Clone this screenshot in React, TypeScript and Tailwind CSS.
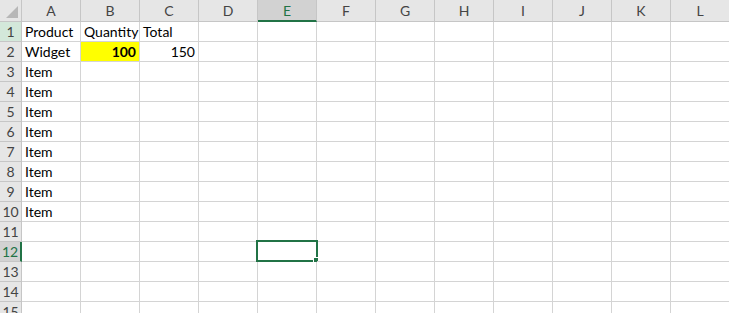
import React from 'react';

const columns = ['A', 'B', 'C', 'D', 'E', 'F', 'G', 'H', 'I', 'J', 'K', 'L'];

type Cell = { text: string; right?: boolean; bold?: boolean; fill?: string };

const data: Record<string, Cell> = {
  A1: { text: 'Product' },
  B1: { text: 'Quantity' },
  C1: { text: 'Total' },
  A2: { text: 'Widget' },
  B2: { text: '100', right: true, bold: true, fill: 'yellow' },
  C2: { text: '150', right: true },
  A3: { text: 'Item' },
  A4: { text: 'Item' },
  A5: { text: 'Item' },
  A6: { text: 'Item' },
  A7: { text: 'Item' },
  A8: { text: 'Item' },
  A9: { text: 'Item' },
  A10: { text: 'Item' },
};

const rows = Array.from({ length: 15 }, (_, i) => i + 1);

const App: React.FC = () => {
  return (
    <div className="w-[729px] h-[313px] overflow-hidden bg-white font-['Lato','Liberation_Sans',sans-serif] text-[14px] leading-none text-black">
      <div className="grid grid-cols-[22px_repeat(12,59px)] grid-rows-[22px_repeat(15,20px)]">
        {/* corner */}
        <div className="relative bg-[#e6e6e6] border-r border-b border-[#c6c6c6]">
          <svg className="absolute right-[3px] bottom-[3px]" width="12" height="12" viewBox="0 0 12 12">
            <polygon points="12,0 12,12 0,12" fill="#b7b7b7" />
          </svg>
        </div>
        {columns.map((c) => {
          const selected = c === 'E';
          return (
            <div
              key={c}
              className={`flex items-center justify-center border-r border-[#c6c6c6] pt-[1px] ${
                selected
                  ? 'bg-[#d2d2d2] text-[#217346] border-b-2 border-b-[#217346]'
                  : 'bg-[#e6e6e6] text-[#444444] border-b border-b-[#c6c6c6]'
              }`}
            >
              {c}
            </div>
          );
        })}
        {rows.map((r) => (
          <React.Fragment key={r}>
            <div
              className={`flex items-end justify-center pb-[2px] border-b border-[#c6c6c6] ${
                r === 12
                  ? 'bg-[#d2d2d2] text-[#217346] border-r-2 border-r-[#217346]'
                  : r === 1
                  ? 'bg-[#d3e8da] text-[#444444] border-r border-r-[#c6c6c6]'
                  : 'bg-[#e6e6e6] text-[#444444] border-r border-r-[#c6c6c6]'
              }`}
            >
              {r}
            </div>
            {columns.map((c) => {
              const cell = data[`${c}${r}`];
              const active = c === 'E' && r === 12;
              return (
                <div
                  key={c}
                  className={`relative flex items-end px-[3px] pb-[2px] border-r border-b border-[#d4d4d4] whitespace-nowrap ${
                    cell?.right ? 'justify-end' : 'justify-start'
                  } ${cell?.fill === 'yellow' ? 'bg-[#ffff00]' : ''} ${cell?.bold ? 'font-bold' : ''}`}
                >
                  {cell?.text}
                  {active && (
                    <div className="absolute -left-[2px] -top-[2px] w-[62px] h-[22px] border-2 border-[#217346]">
                      <div className="absolute -right-[3px] -bottom-[3px] w-[6px] h-[6px] bg-[#217346] border border-white" />
                    </div>
                  )}
                </div>
              );
            })}
          </React.Fragment>
        ))}
      </div>
    </div>
  );
};

export default App;
